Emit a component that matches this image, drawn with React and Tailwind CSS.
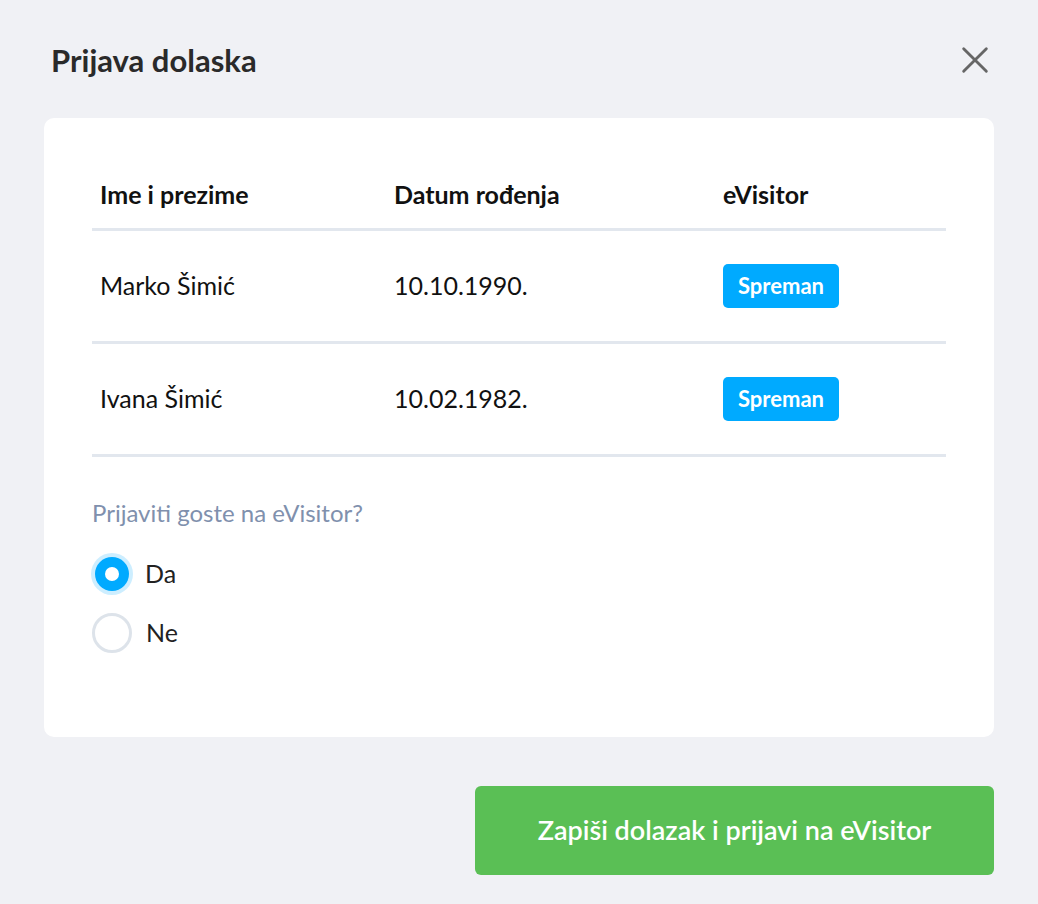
export default function App() {
  const guests = [
    { name: "Marko Šimić", dob: "10.10.1990." },
    { name: "Ivana Šimić", dob: "10.02.1982." },
  ];
  return (
    <div
      className="w-[1038px] h-[904px] bg-[#f0f1f5] px-[44px] pt-[38px] text-[#222]"
      style={{ fontFamily: "Lato, 'Open Sans', sans-serif" }}
    >
      <div className="flex items-center justify-between pl-[7px] pr-[2px] h-[44px]">
        <h1 className="text-[31px] font-bold text-[#2a2a2a]">Prijava dolaska</h1>
        <svg width="34" height="34" viewBox="0 0 24 24" stroke="#666" strokeWidth="2" strokeLinecap="round">
          <path d="M4 4l16 16M20 4L4 20" />
        </svg>
      </div>
      <div className="mt-[36px] bg-white rounded-[10px] h-[619px] px-[48px] pt-[58px]">
        <div className="grid grid-cols-[294px_329px_1fr] text-[25px] font-bold text-[#111] pb-[14px] border-b-[3px] border-[#e2e7ee]">
          <div className="pl-[8px]">Ime i prezime</div>
          <div className="pl-[8px]">Datum rođenja</div>
          <div className="pl-[8px]">eVisitor</div>
        </div>
        {guests.map((g) => (
          <div
            key={g.name}
            className="grid grid-cols-[294px_329px_1fr] items-center h-[113px] text-[25px] text-[#111] border-b-[3px] border-[#e2e7ee]"
          >
            <div className="pl-[8px]">{g.name}</div>
            <div className="pl-[8px]">{g.dob}</div>
            <div className="pl-[8px]">
              <span className="inline-block bg-[#00aaff] text-white text-[22px] font-bold rounded-[5px] px-[15px] py-[6px] leading-[32px]">
                Spreman
              </span>
            </div>
          </div>
        ))}
        <p className="mt-[38px] text-[24px] text-[#8090ad]">Prijaviti goste na eVisitor?</p>
        <div className="mt-[22px] flex flex-col gap-[18px] text-[25px] text-[#222]">
          <label className="flex items-center gap-[12px]">
            <span className="w-[42px] h-[42px] -ml-[1px] rounded-full bg-[#cdeeff] flex items-center justify-center">
              <span className="w-[34px] h-[34px] rounded-full bg-[#00aaff] flex items-center justify-center">
                <span className="w-[14px] h-[14px] rounded-full bg-white" />
              </span>
            </span>
            Da
          </label>
          <label className="flex items-center gap-[14px]">
            <span className="w-[40px] h-[40px] rounded-full border-[3px] border-[#dde3ea]" />
            Ne
          </label>
        </div>
      </div>
      <div className="flex justify-end mt-[49px]">
        <button className="w-[519px] h-[89px] bg-[#5abf55] text-white text-[27px] font-semibold rounded-[6px]">
          Zapiši dolazak i prijavi na eVisitor
        </button>
      </div>
    </div>
  );
}
